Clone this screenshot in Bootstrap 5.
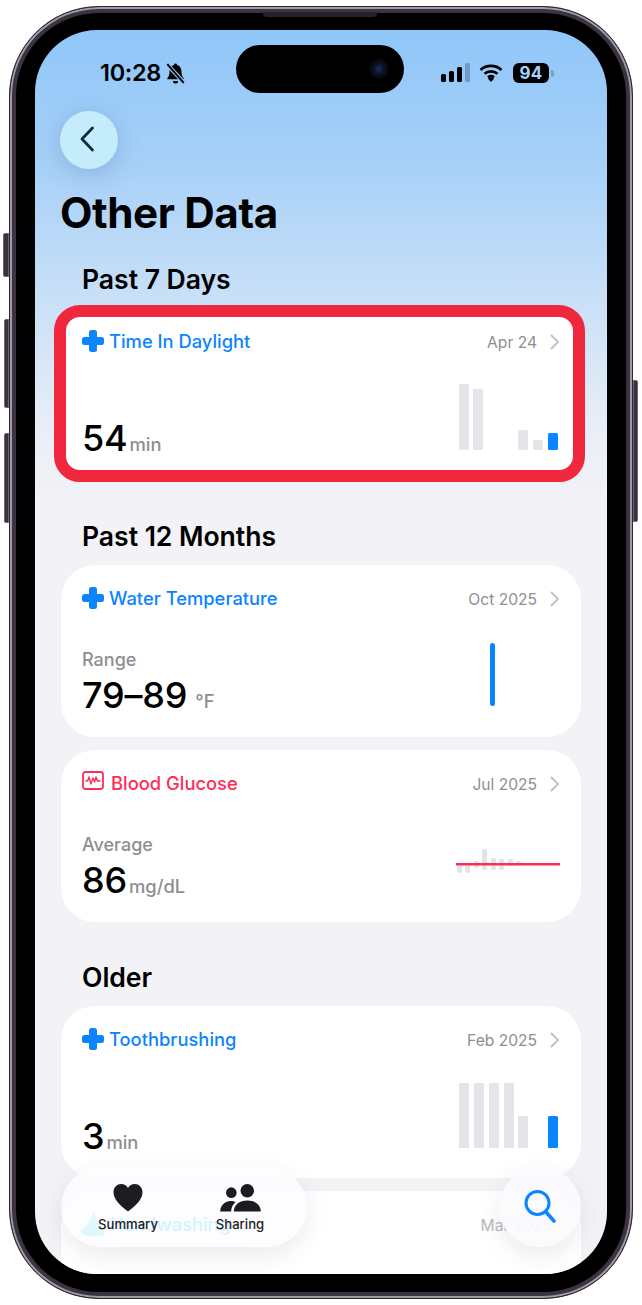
<!DOCTYPE html>
<html lang="en">
<head>
<meta charset="utf-8">
<title>Other Data</title>
<link rel="stylesheet" href="https://cdn.jsdelivr.net/npm/bootstrap@5.3.0/dist/css/bootstrap.min.css">
<style>
html,body{margin:0;background:#fff;width:642px;height:1305px;overflow:hidden}
body{font-family:Inter,"Noto Sans",sans-serif;color:#000;-webkit-font-smoothing:antialiased}
.stage{position:relative;width:642px;height:1305px;padding:6px 9px}
.hw{position:absolute;background:#3a3140;border:1px solid #6d6573}
.hw-mute{left:3px;top:233px;width:6px;height:44px;border-radius:2px 0 0 2px}
.hw-up{left:4px;top:319px;width:5px;height:89px;border-radius:2px 0 0 2px}
.hw-down{left:4px;top:433px;width:5px;height:90px;border-radius:2px 0 0 2px}
.hw-power{right:4px;top:380px;width:5px;height:142px;border-radius:0 2px 2px 0}
.bezel{position:relative;width:624px;height:1293px;border-radius:90px;background:#000;padding:23px 25px 24px;border:1px solid #2b2630;box-shadow:inset 0 0 0 2px #a09aa4,inset 0 0 0 6px #3b3242}
.speaker{position:absolute;left:253px;top:5px;width:114px;height:5px;background:#26202b;border-radius:0 0 4px 4px}
.screen{position:relative;width:572px;height:1244px;overflow:hidden;border-radius:62px;background:linear-gradient(180deg,#90c6f9 0,#a6d0f8 130px,#c9e0f7 270px,#e9eef6 400px,#f2f2f7 470px)}
.statusbar{height:63px}
.status-left{width:201px;padding:25px 0 0 65px;gap:4px;font-size:23.5px;font-weight:600;line-height:36px;letter-spacing:-.3px}
.bell{margin-top:8px}
.island{width:168px;height:48px;margin-top:15px;background:#000;border-radius:24px;position:relative;flex:none}
.lens{position:absolute;right:15px;top:14px;width:20px;height:20px;border-radius:50%;background:radial-gradient(circle,#1b3358 0,#0c1426 35%,#07080c 65%)}
.status-right{padding:33px 0 0 37px;gap:8px}
.batt{width:36px;height:20px;margin-left:2px;background:#000;border-radius:6px;color:#a8d2fb;font-size:17px;font-weight:700;line-height:20px;text-align:center;letter-spacing:.2px}
.batt-tip{width:3px;height:7px;background:#7f9fbe;border-radius:0 2px 2px 0;margin:6.5px 0 0 -6px}
.back{width:58px;height:58px;margin:18px 0 0 25px;border-radius:50%;background:#c5ecfb;box-shadow:0 5px 24px rgba(60,100,150,.28);border:0;padding:0 4px 2px 0}
.page-title{margin:19px 0 0 25px;font-size:42.2px;font-weight:700;line-height:50px;letter-spacing:-.4px}
.sec-head{margin:0 0 14px 47px;font-size:26.6px;font-weight:600;line-height:30px;letter-spacing:-.05px}
.sec-first{margin-top:26px}
.sec-next{margin-top:41px}
.sec-older{margin-top:40px}
.stack{margin:0 26px;display:flex;flex-direction:column;gap:13px}
.hcard{position:relative;height:172px;border:0;border-radius:34px;background:#fff;padding:0 21px;display:block}
.hcard-top{height:66px;padding-top:19px;gap:5px}
.ico-plus{margin-top:3px}
.ico-pulse{margin-top:2px;margin-right:2px}
.hcard-name{font-size:18.35px;font-weight:500;line-height:28px}
.c-blue{color:#0a84ff}.c-red{color:#ff2d55}.c-aqua{color:#00c8ff}
.hcard-date{font-size:15.6px;color:#8e8e93;line-height:28px;margin:2px 8px 0 0}
.date-faint{color:#b9b9be}
.chev{margin-top:7px}
.hcard-body{height:106px}
.val{padding-bottom:13px}
.lbl{font-size:18px;font-weight:500;color:#8e8e93;line-height:24px}
.num{font-size:36px;font-weight:500;line-height:46px;letter-spacing:-.2px}
.unit{font-size:18.4px;font-weight:500;color:#8e8e93;margin-left:2px;letter-spacing:0}
.unit-f{margin-left:8px}
.chart{display:block;flex:none;margin-right:1px}
.chart-a{margin-bottom:30px}
.chart-b{margin-bottom:18px;margin-right:0}
.chart-d{margin-bottom:16px;margin-right:0}
.chart-c{margin-bottom:29px}
.ring{position:absolute;top:-3px;bottom:-2px;left:-7px;right:-4px;border:12.5px solid #f0283e;border-radius:26px}
.blob{position:absolute;left:18px;top:18px}
.name-off{margin-left:28px}
.fade{position:absolute;left:0;right:0;bottom:0;height:144px;background:linear-gradient(180deg,rgba(242,242,247,0) 0,rgba(242,242,247,.3) 32%,rgba(242,242,247,.84) 41%,rgba(242,242,247,.86) 66%,#f2f2f7 84%)}
.dock{position:absolute;left:26px;bottom:27px;width:246px;height:80px;border-radius:40px;background:rgba(252,252,255,.82);box-shadow:0 8px 24px rgba(60,60,80,.1);padding:0 22px 0 22px}
.tab{width:90px;padding-top:16px;font-size:13.1px;font-weight:500;line-height:16px;color:#1c1c1e;text-align:center}
.tab svg{display:block;margin:0 auto 4px}
.find{position:absolute;right:26px;bottom:27px;width:82px;height:80px;border-radius:50%;background:rgba(251,251,254,.92);box-shadow:0 8px 24px rgba(60,60,80,.1);border:0;padding:0}
</style>
</head>
<body>
<div class="stage">
  <div class="hw hw-mute"></div><div class="hw hw-up"></div><div class="hw hw-down"></div><div class="hw hw-power"></div>
  <div class="bezel">
    <div class="speaker"></div>
    <div class="screen">
      <div class="statusbar d-flex">
        <div class="status-left d-flex align-items-start">
          <span>10:28</span>
          <svg class="bell" width="21" height="21" viewBox="1 1.500 19 20.500" aria-hidden="true"><path d="M10.500 2a1.500 1.500 0 0 1 1.500 1.400c2.700.7 4.300 3 4.300 6 0 3.300.6 5.200 2.200 7v1H2.500v-1c1.600-1.800 2.200-3.700 2.200-7 0-3 1.600-5.300 4.300-6A1.500 1.500 0 0 1 10.500 2zM8 19h5a2.500 2.500 0 0 1-5 0z" fill="#000"/><path d="M2 2.500l17 18.500" stroke="#90c6f9" stroke-width="4"/><path d="M2.500 2.500l16 18.500" stroke="#000" stroke-width="1.800"/></svg>
        </div>
        <div class="island"><div class="lens"></div></div>
        <div class="status-right d-flex align-items-start">
          <svg width="30" height="19" viewBox="0 0 30 19" aria-hidden="true"><rect x="0" y="11" width="5" height="8" rx="1.500"/><rect x="8" y="8" width="5" height="11" rx="1.500"/><rect x="16" y="4" width="5" height="15" rx="1.500"/><rect x="24" y="0" width="5" height="19" rx="1.500" fill="#6f9bc6"/></svg>
          <svg width="24" height="19" viewBox="0 0 24 19" aria-hidden="true"><path d="M1.500 7a15.500 15.500 0 0 1 21 0M5.500 10.800a10 10 0 0 1 13 0M9 14.300a5 5 0 0 1 6 0" fill="none" stroke="#000" stroke-width="2.700"/><path d="M12 19l-3-3.300a4.500 4.500 0 0 1 6 0z"/></svg>
          <div class="batt">94</div><div class="batt-tip"></div>
        </div>
      </div>

      <button type="button" class="back d-flex align-items-center justify-content-center" aria-label="Back">
        <svg width="16" height="26" viewBox="0 0 16 26" aria-hidden="true"><path d="M13.500 2L3 13l10.500 11" fill="none" stroke="#0f2a4a" stroke-width="2.800" stroke-linecap="round" stroke-linejoin="round"/></svg>
      </button>

      <h1 class="page-title">Other Data</h1>

      <h2 class="sec-head sec-first">Past 7 Days</h2>
      <div class="stack">
        <div class="hcard card">
          <div class="hcard-top d-flex align-items-start">
            <svg class="ico-plus" width="22" height="22" viewBox="0 0 22 22" aria-hidden="true"><path d="M9.500 0h3A2.500 2.500 0 0 1 15 2.500V7h4.500A2.500 2.500 0 0 1 22 9.500v3a2.500 2.500 0 0 1-2.500 2.500H15v4.500a2.500 2.500 0 0 1-2.500 2.500h-3A2.500 2.500 0 0 1 7 19.500V15H2.500A2.500 2.500 0 0 1 0 12.500v-3A2.500 2.500 0 0 1 2.500 7H7V2.500A2.500 2.500 0 0 1 9.500 0z" fill="#0a84ff"/></svg>
            <span class="hcard-name c-blue">Time In Daylight</span>
            <span class="hcard-date ms-auto">Apr 24</span>
            <svg class="chev" width="10" height="16" viewBox="0 0 10 16" aria-hidden="true"><path d="M1.500 1.500L8 8l-6.500 6.500" fill="none" stroke="#c4c4c8" stroke-width="2" stroke-linecap="round" stroke-linejoin="round"/></svg>
          </div>
          <div class="hcard-body d-flex justify-content-between align-items-end">
            <div class="num val">54<span class="unit">min</span></div>
            <svg class="chart chart-a" width="100" height="66" viewBox="0 0 100 66" aria-hidden="true"><g fill="#e4e4e9"><rect x="0" y="0" width="10" height="66" rx="1.500"/><rect x="14" y="5" width="10" height="61" rx="1.500"/><rect x="59" y="46" width="10" height="20" rx="1.500"/><rect x="74" y="56" width="10" height="10" rx="1.500"/></g><rect x="89" y="49" width="10" height="17" rx="1.500" fill="#0a84ff"/></svg>
          </div>
          <div class="ring"></div>
        </div>
      </div>

      <h2 class="sec-head sec-next">Past 12 Months</h2>
      <div class="stack">
        <div class="hcard card">
          <div class="hcard-top d-flex align-items-start">
            <svg class="ico-plus" width="22" height="22" viewBox="0 0 22 22" aria-hidden="true"><path d="M9.500 0h3A2.500 2.500 0 0 1 15 2.500V7h4.500A2.500 2.500 0 0 1 22 9.500v3a2.500 2.500 0 0 1-2.500 2.500H15v4.500a2.500 2.500 0 0 1-2.500 2.500h-3A2.500 2.500 0 0 1 7 19.500V15H2.500A2.500 2.500 0 0 1 0 12.500v-3A2.500 2.500 0 0 1 2.500 7H7V2.500A2.500 2.500 0 0 1 9.500 0z" fill="#0a84ff"/></svg>
            <span class="hcard-name c-blue">Water Temperature</span>
            <span class="hcard-date ms-auto">Oct 2025</span>
            <svg class="chev" width="10" height="16" viewBox="0 0 10 16" aria-hidden="true"><path d="M1.500 1.500L8 8l-6.500 6.500" fill="none" stroke="#c4c4c8" stroke-width="2" stroke-linecap="round" stroke-linejoin="round"/></svg>
          </div>
          <div class="hcard-body d-flex justify-content-between align-items-end">
            <div class="val"><div class="lbl">Range</div><div class="num">79–89<span class="unit unit-f">°F</span></div></div>
            <svg class="chart chart-b" width="104" height="78" viewBox="0 0 104 78" aria-hidden="true"><rect x="34" y="2" width="5" height="63" rx="2.500" fill="#0a84ff"/></svg>
          </div>
        </div>
        <div class="hcard card">
          <div class="hcard-top d-flex align-items-start">
            <svg class="ico-pulse" width="22" height="20" viewBox="0 0 22 20" aria-hidden="true"><rect x="1" y="1" width="20" height="17" rx="2.500" fill="none" stroke="#ff2d55" stroke-width="1.800"/><path d="M3.500 10h2l1.500-4 2 7 2-6 1.500 4 1.500-5 1.500 4h3" fill="none" stroke="#ff2d55" stroke-width="1.400" stroke-linejoin="round"/></svg>
            <span class="hcard-name c-red">Blood Glucose</span>
            <span class="hcard-date ms-auto">Jul 2025</span>
            <svg class="chev" width="10" height="16" viewBox="0 0 10 16" aria-hidden="true"><path d="M1.500 1.500L8 8l-6.500 6.500" fill="none" stroke="#c4c4c8" stroke-width="2" stroke-linecap="round" stroke-linejoin="round"/></svg>
          </div>
          <div class="hcard-body d-flex justify-content-between align-items-end">
            <div class="val"><div class="lbl">Average</div><div class="num">86<span class="unit">mg/dL</span></div></div>
            <svg class="chart chart-d" width="104" height="78" viewBox="0 0 104 78" aria-hidden="true"><g fill="#e2e2e7"><rect x="1" y="35" width="5" height="10" rx="2"/><rect x="9" y="35" width="5" height="10" rx="2"/><rect x="18" y="33" width="5" height="7" rx="2"/><rect x="26" y="21" width="5" height="21" rx="2"/><rect x="35" y="30" width="5" height="12" rx="2"/><rect x="43" y="31" width="5" height="11" rx="2"/><rect x="52" y="31" width="5" height="7" rx="2"/><rect x="60" y="33" width="5" height="5" rx="2"/></g><rect x="0" y="35" width="104" height="2.500" fill="#ff2d55"/></svg>
          </div>
        </div>
      </div>

      <h2 class="sec-head sec-older">Older</h2>
      <div class="stack">
        <div class="hcard card">
          <div class="hcard-top d-flex align-items-start">
            <svg class="ico-plus" width="22" height="22" viewBox="0 0 22 22" aria-hidden="true"><path d="M9.500 0h3A2.500 2.500 0 0 1 15 2.500V7h4.500A2.500 2.500 0 0 1 22 9.500v3a2.500 2.500 0 0 1-2.500 2.500H15v4.500a2.500 2.500 0 0 1-2.500 2.500h-3A2.500 2.500 0 0 1 7 19.500V15H2.500A2.500 2.500 0 0 1 0 12.500v-3A2.500 2.500 0 0 1 2.500 7H7V2.500A2.500 2.500 0 0 1 9.500 0z" fill="#0a84ff"/></svg>
            <span class="hcard-name c-blue">Toothbrushing</span>
            <span class="hcard-date ms-auto">Feb 2025</span>
            <svg class="chev" width="10" height="16" viewBox="0 0 10 16" aria-hidden="true"><path d="M1.500 1.500L8 8l-6.500 6.500" fill="none" stroke="#c4c4c8" stroke-width="2" stroke-linecap="round" stroke-linejoin="round"/></svg>
          </div>
          <div class="hcard-body d-flex justify-content-between align-items-end">
            <div class="num val">3<span class="unit">min</span></div>
            <svg class="chart chart-c" width="100" height="66" viewBox="0 0 100 66" aria-hidden="true"><g fill="#e4e4e9"><rect x="0" y="0" width="10" height="65" rx="1"/><rect x="15" y="0" width="10" height="65" rx="1"/><rect x="30" y="0" width="10" height="65" rx="1"/><rect x="45" y="0" width="10" height="65" rx="1"/><rect x="59" y="33" width="10" height="32" rx="1"/></g><rect x="89" y="33" width="10" height="32" rx="1.500" fill="#0a84ff"/></svg>
          </div>
        </div>
        <div class="hcard card">
          <svg class="blob" width="28" height="30" viewBox="0 0 28 30" aria-hidden="true"><path d="M15 2l3 10 8 12-3 3H6L1 22l7-6z" fill="#5fdcf6"/></svg>
          <div class="hcard-top d-flex align-items-start">
            <span class="hcard-name c-aqua name-off">Handwashing</span>
            <span class="hcard-date date-faint ms-auto">Mar 2025</span>
          </div>
        </div>
      </div>

      <div class="fade"></div>

      <div class="dock d-flex justify-content-between">
        <div class="tab">
          <svg width="32" height="29" viewBox="0 0 32 30" aria-hidden="true"><path d="M16 29.500C10 24.500 1 18 1 9.500 1 4.300 4.800 1 9 1c3 0 5.500 1.500 7 4.300C17.500 2.500 20 1 23 1c4.200 0 8 3.300 8 8.500C31 18 22 24.500 16 29.500z" fill="#1c1c1e"/></svg>
          Summary
        </div>
        <div class="tab">
          <svg width="41" height="29" viewBox="0 0 42 30" aria-hidden="true"><g fill="#1c1c1e"><circle cx="11.500" cy="10" r="5.500"/><circle cx="28" cy="8" r="7"/><path d="M0 29.500c0-6.500 5-11 11-11 2 0 3.500.5 5 1.300-3 2.300-4.700 5.800-4.700 9.700z"/><path d="M14 29.500c0-7 6-11.500 14-11.500s14 4.500 14 11.500z"/></g></svg>
          Sharing
        </div>
      </div>

      <button type="button" class="find d-flex align-items-center justify-content-center" aria-label="Search">
        <svg width="32" height="36" viewBox="0 0 32 36" aria-hidden="true"><circle cx="13.500" cy="14" r="11.500" fill="none" stroke="#0a84ff" stroke-width="3"/><path d="M22 23l8 9" stroke="#0a84ff" stroke-width="3.500" stroke-linecap="round"/></svg>
      </button>
    </div>
  </div>
</div>
</body>
</html>
